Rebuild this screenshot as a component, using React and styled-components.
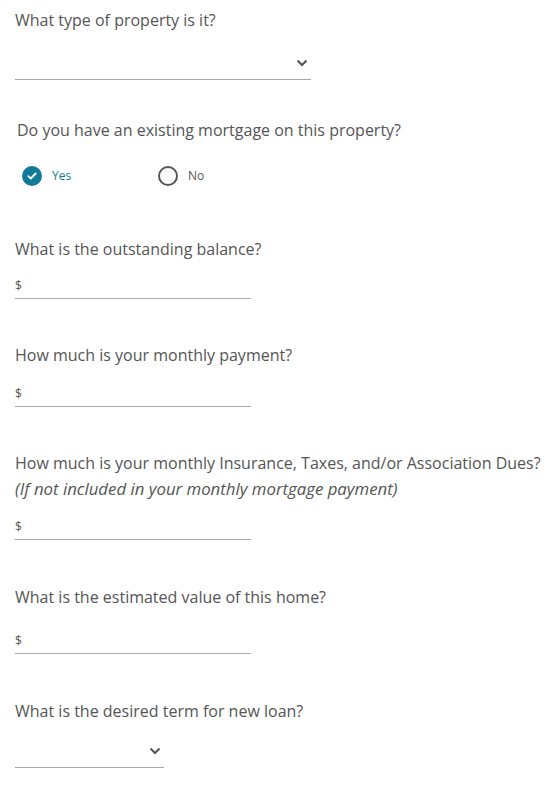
import React, { useState } from 'react';
import styled, { createGlobalStyle } from 'styled-components';

const GlobalStyle = createGlobalStyle`
  html, body {
    margin: 0;
    padding: 0;
    background: #ffffff;
  }
  body {
    font-family: "Open Sans", "Liberation Sans", Arial, sans-serif;
    color: #555555;
  }
`;

const Chevron = () => (
  <svg width="10" height="7" viewBox="0 0 10 7" aria-hidden="true">
    <path d="M1.2 1.2 L5 5 L8.8 1.2" fill="none" stroke="#555" strokeWidth="2" strokeLinecap="square" />
  </svg>
);

const CheckMark = () => (
  <svg width="10" height="8" viewBox="0 0 10 8" aria-hidden="true">
    <path d="M1.3 4.2 L3.8 6.5 L8.7 1.5" fill="none" stroke="#fff" strokeWidth="1.8" strokeLinecap="round" strokeLinejoin="round" />
  </svg>
);

const App = () => {
  const [hasMortgage, setHasMortgage] = useState(true);

  return (
    <>
      <GlobalStyle />
      <Form>
        <Field>
          <Label>What type of property is it?</Label>
          <SelectBox $width={296} $top={20}>
            <Chevron />
          </SelectBox>
        </Field>

        <Field $top={40}>
          <Label $indent={2}>Do you have an existing mortgage on this property?</Label>
          <RadioRow>
            <RadioOption onClick={() => setHasMortgage(true)} $width={136}>
              <RadioCircle $checked={hasMortgage}>{hasMortgage && <CheckMark />}</RadioCircle>
              <RadioText $checked={hasMortgage}>Yes</RadioText>
            </RadioOption>
            <RadioOption onClick={() => setHasMortgage(false)}>
              <RadioCircle $checked={!hasMortgage}>{!hasMortgage && <CheckMark />}</RadioCircle>
              <RadioText $checked={!hasMortgage}>No</RadioText>
            </RadioOption>
          </RadioRow>
        </Field>

        <Field $top={53}>
          <Label>What is the outstanding balance?</Label>
          <MoneyInput $top={15}>
            <Dollar>$</Dollar>
          </MoneyInput>
        </Field>

        <Field $top={46}>
          <Label>How much is your monthly payment?</Label>
          <MoneyInput $top={17}>
            <Dollar>$</Dollar>
          </MoneyInput>
        </Field>

        <Field $top={46}>
          <Label>How much is your monthly Insurance, Taxes, and/or Association Dues?</Label>
          <Note>(If not included in your monthly mortgage payment)</Note>
          <MoneyInput $top={16}>
            <Dollar>$</Dollar>
          </MoneyInput>
        </Field>

        <Field $top={47}>
          <Label>What is the estimated value of this home?</Label>
          <MoneyInput $top={22}>
            <Dollar>$</Dollar>
          </MoneyInput>
        </Field>

        <Field $top={47}>
          <Label>What is the desired term for new loan?</Label>
          <SelectBox $width={149} $top={17}>
            <Chevron />
          </SelectBox>
        </Field>
      </Form>
    </>
  );
};

export default App;

const Form = styled.div`
  display: flex;
  flex-direction: column;
  padding: 10px 15px 24px;
`;

const Field = styled.div`
  display: flex;
  flex-direction: column;
  margin-top: ${({ $top }) => $top || 0}px;
`;

const Label = styled.div`
  font-size: 16px;
  line-height: 20px;
  color: #555555;
  white-space: nowrap;
  padding-left: ${({ $indent }) => $indent || 0}px;
`;

const Note = styled.div`
  font-size: 16.8px;
  line-height: 20px;
  font-style: italic;
  color: #555555;
  margin-top: 6px;
`;

const SelectBox = styled.div`
  box-sizing: border-box;
  width: ${({ $width }) => $width}px;
  height: 30px;
  margin-top: ${({ $top }) => $top}px;
  border-bottom: 1px solid #a8a8a8;
  display: flex;
  align-items: center;
  justify-content: flex-end;
  padding: 0 4px 2px 0;
`;

const MoneyInput = styled.div`
  box-sizing: border-box;
  width: 236px;
  height: 25px;
  margin-top: ${({ $top }) => $top}px;
  border-bottom: 1px solid #a8a8a8;
  display: flex;
  align-items: center;
  padding-bottom: 2px;
`;

const Dollar = styled.span`
  font-size: 12px;
  color: #555555;
`;

const RadioRow = styled.div`
  display: flex;
  align-items: center;
  margin-top: 26px;
  padding-left: 7px;
`;

const RadioOption = styled.label`
  display: flex;
  align-items: center;
  gap: 10px;
  width: ${({ $width }) => ($width ? `${$width}px` : 'auto')};
  cursor: pointer;
`;

const RadioCircle = styled.span`
  box-sizing: border-box;
  width: 20px;
  height: 20px;
  border-radius: 50%;
  display: flex;
  align-items: center;
  justify-content: center;
  background: ${({ $checked }) => ($checked ? '#127a99' : '#ffffff')};
  border: 2px solid ${({ $checked }) => ($checked ? '#127a99' : '#555555')};
`;

const RadioText = styled.span`
  font-size: 12px;
  line-height: 14px;
  color: ${({ $checked }) => ($checked ? '#127a99' : '#555555')};
`;
